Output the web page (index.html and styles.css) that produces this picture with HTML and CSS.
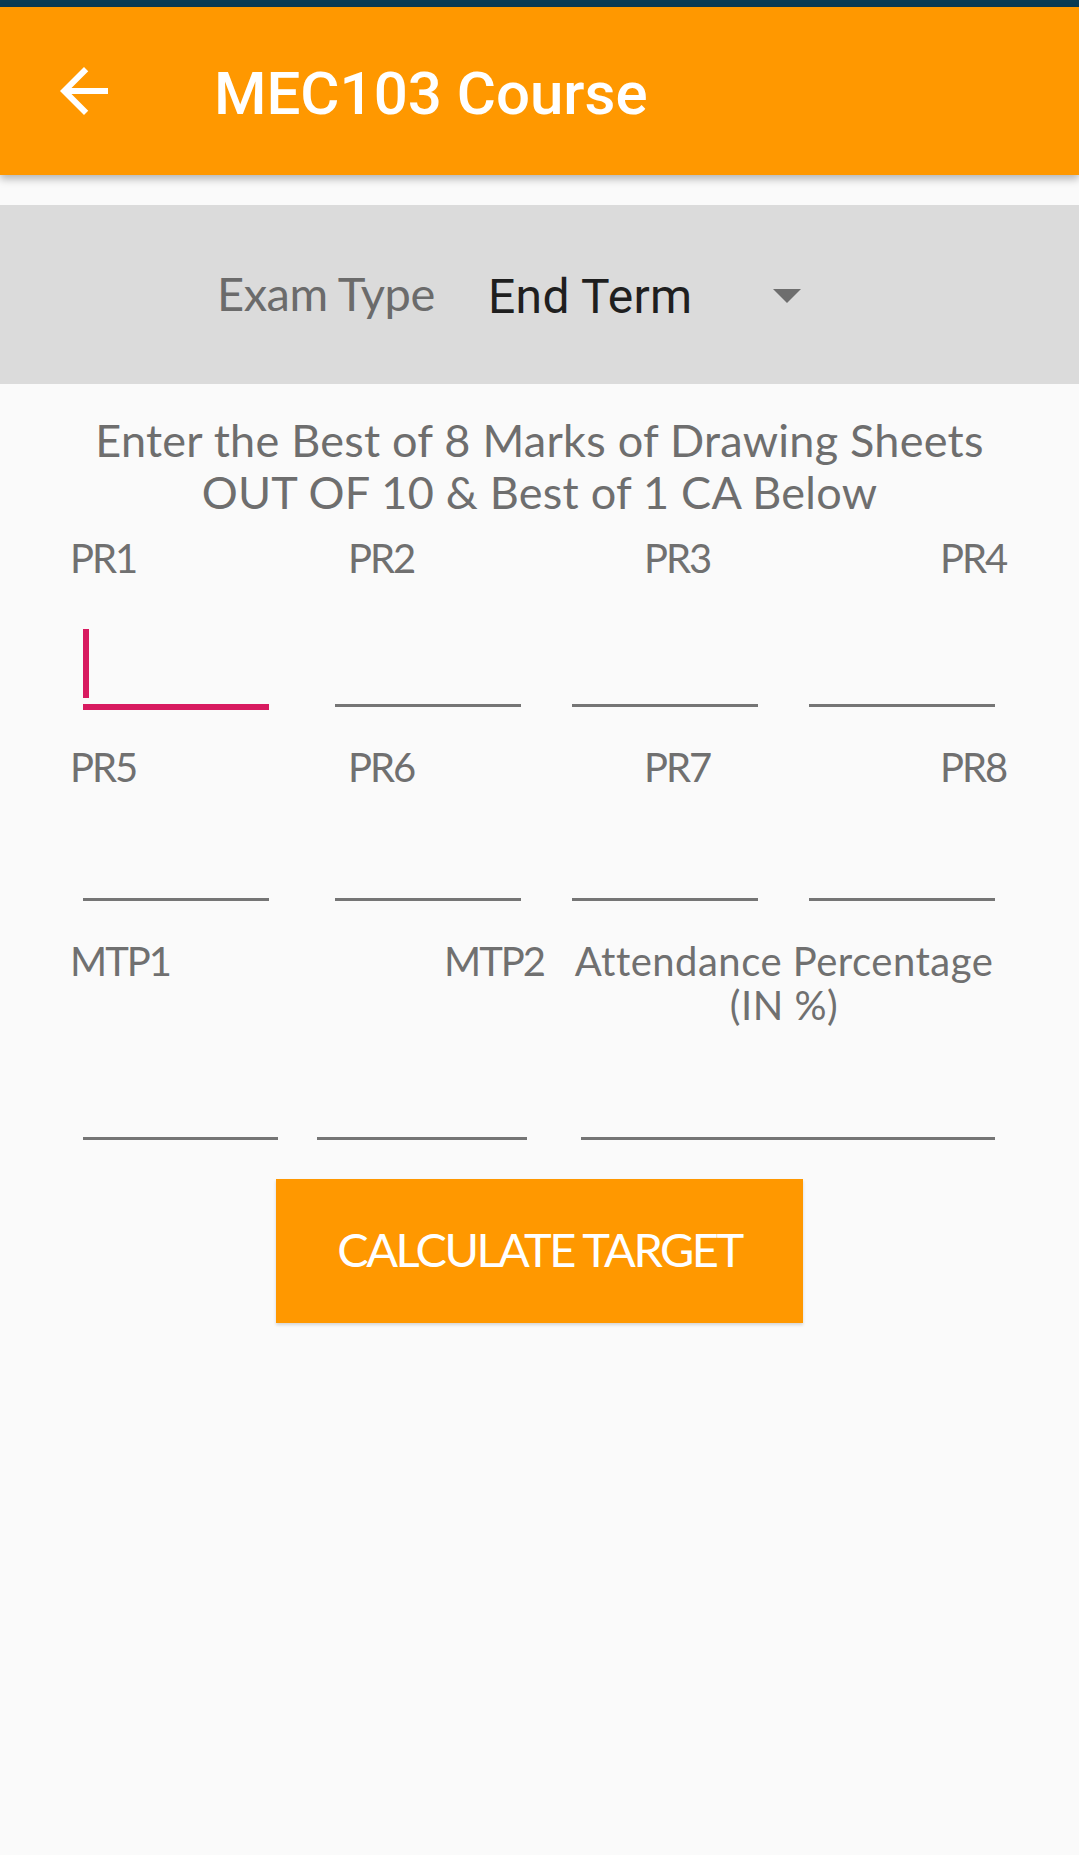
FILE: index.html
```html
<!DOCTYPE html>
<html lang="en">
<head>
<meta charset="utf-8">
<title>MEC103 Course</title>
<link rel="stylesheet" href="styles.css">
</head>
<body>
<div class="screen">
  <div class="statusbar"></div>
  <header class="appbar">
    <svg class="back" viewBox="0 0 24 24" width="72" height="72" aria-hidden="true"><path d="M20 11H7.83l5.59-5.59L12 4l-8 8 8 8 1.41-1.41L7.83 13H20v-2z" fill="#ffffff"/></svg>
    <h1 class="title">MEC103 Course</h1>
  </header>

  <section class="exam-row">
    <span class="exam-label">Exam Type</span>
    <div class="spinner">
      <span class="spinner-value">End Term</span>
      <span class="caret"></span>
    </div>
  </section>

  <p class="intro">Enter the Best of 8 Marks of Drawing Sheets<br>OUT OF 10 &amp; Best of 1 CA Below</p>

  <div class="labels quad first">
    <span>PR1</span><span>PR2</span><span>PR3</span><span>PR4</span>
  </div>
  <div class="fields quad-fields row1">
    <div class="field focused"><div class="cursor"></div></div>
    <div class="field"></div>
    <div class="field"></div>
    <div class="field"></div>
  </div>

  <div class="labels quad second">
    <span>PR5</span><span>PR6</span><span>PR7</span><span>PR8</span>
  </div>
  <div class="fields quad-fields row2">
    <div class="field"></div>
    <div class="field"></div>
    <div class="field"></div>
    <div class="field"></div>
  </div>

  <div class="labels triple">
    <span>MTP1</span><span>MTP2</span><span class="attendance">Attendance Percentage<br>(IN %)</span>
  </div>
  <div class="fields triple-fields">
    <div class="field f-mtp1"></div>
    <div class="field f-mtp2"></div>
    <div class="field f-att"></div>
  </div>

  <button class="calc" type="button">CALCULATE TARGET</button>
</div>
</body>
</html>
```

FILE: styles.css
```css
html, body {
  margin: 0;
  padding: 0;
  background: #fafafa;
}

.screen {
  width: 1079px;
  min-height: 1855px;
  background: #fafafa;
  font-family: Lato, "Open Sans", sans-serif;
}

.statusbar {
  height: 7px;
  background: #0a3b54;
}

.appbar {
  position: relative;
  z-index: 1;
  height: 168px;
  background: #ff9800;
  display: flex;
  align-items: center;
  padding-left: 48px;
  box-shadow: 0 4px 8px rgba(0, 0, 0, 0.28);
}

.back {
  flex: none;
  display: block;
}

.title {
  margin: 0 0 0 94px;
  padding-top: 5px;
  font-family: Roboto, sans-serif;
  font-weight: 500;
  font-size: 60px;
  line-height: 70px;
  color: #ffffff;
}

.exam-row {
  margin-top: 30px;
  height: 179px;
  box-sizing: border-box;
  background: #dbdbdb;
  display: flex;
  align-items: flex-start;
  padding-top: 60px;
  padding-left: 217px;
}

.exam-label {
  width: 271px;
  font-size: 47px;
  line-height: 56px;
  letter-spacing: -0.5px;
  color: #6b6b6b;
}

.spinner {
  display: flex;
  align-items: flex-start;
}

.spinner-value {
  width: 285px;
  margin-top: 4px;
  font-family: Roboto, sans-serif;
  font-size: 48px;
  line-height: 56px;
  letter-spacing: 0.3px;
  color: #1f1f1f;
}

.caret {
  width: 0;
  height: 0;
  margin-top: 24px;
  border-left: 14.5px solid transparent;
  border-right: 14.5px solid transparent;
  border-top: 14px solid #6e6e6e;
}

.intro {
  margin: 30px 0 0;
  text-align: center;
  font-size: 45px;
  line-height: 52px;
  letter-spacing: 0.25px;
  color: #6e6e6e;
}

.intro-2 {
  letter-spacing: 0.4px;
}

.labels {
  display: grid;
  padding-left: 70px;
  font-size: 40px;
  line-height: 48px;
  letter-spacing: -2px;
  color: #707070;
  white-space: nowrap;
}

.quad {
  grid-template-columns: 278px 296px 296px auto;
}

.labels.first {
  margin-top: 16px;
}

.labels.second {
  margin-top: 36px;
}

.triple {
  margin-top: 38px;
  line-height: 44px;
  grid-template-columns: 374px 116px 448px;
}

.attendance {
  text-align: center;
  letter-spacing: 0.5px;
}

.fields {
  display: flex;
  align-items: flex-start;
  padding-left: 83px;
}

.field {
  flex: none;
  border-bottom: 3px solid #757575;
}

.quad-fields .field {
  width: 186px;
  margin-right: 51px;
}

.quad-fields .field:first-child {
  margin-right: 66px;
}

.row1 .field {
  height: 122px;
}

.row2 .field {
  height: 107px;
}

.triple-fields .field {
  height: 110px;
}

.f-mtp1 {
  width: 195px;
  margin-right: 39px;
}

.f-mtp2 {
  width: 210px;
  margin-right: 54px;
}

.f-att {
  width: 414px;
}

.field.focused {
  border-bottom-color: #d81b60;
  box-shadow: 0 3px 0 #d81b60;
}

.cursor {
  width: 6px;
  height: 69px;
  margin-top: 47px;
  background: #d81b60;
}

.calc {
  display: flex;
  align-items: center;
  justify-content: center;
  width: 527px;
  height: 144px;
  margin: 39px auto 0;
  padding: 0 0 4px;
  border: 0;
  border-radius: 0;
  background: #ff9800;
  box-shadow: 0 2px 3px rgba(0, 0, 0, 0.15);
  font-family: Lato, "Open Sans", sans-serif;
  font-size: 47px;
  letter-spacing: -2.5px;
  color: #ffffff;
}
```
